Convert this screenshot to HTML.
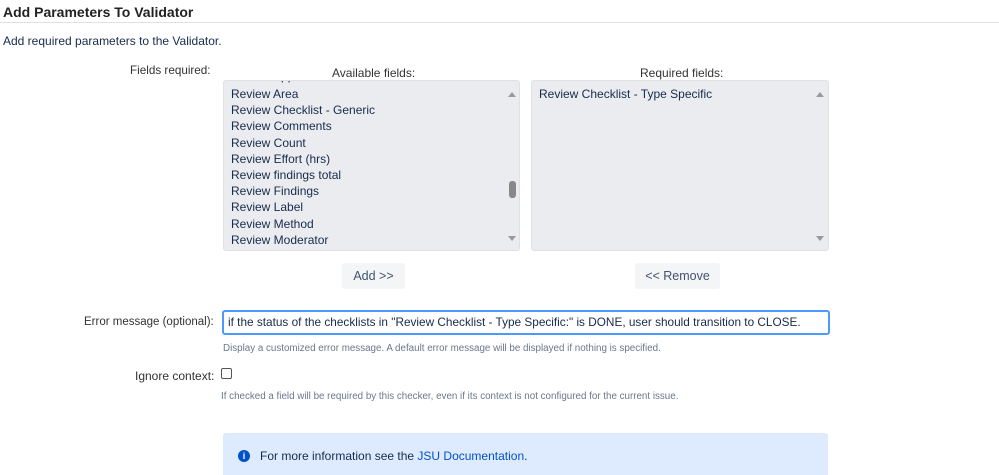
<!DOCTYPE html>
<html><head><meta charset="utf-8"><style>
body{margin:0;width:999px;height:475px;background:#fff;font-family:"Liberation Sans",sans-serif;color:#172b4d;position:relative;overflow:hidden;font-size:12px}
.a{position:absolute;white-space:nowrap}
.box{position:absolute;background:#ebecf0;border-radius:3px;border:1px solid #dfe1e6;box-sizing:border-box;overflow:hidden}
.it{position:absolute;left:14px;font-size:12px;color:#172b4d}
.btn{position:absolute;background:#f4f5f7;border-radius:3px;font-size:12.5px;color:#42526e;text-align:center;line-height:26px;height:26px}
.help{color:#6b778c}
.arr{position:absolute;width:0;height:0;border-left:4px solid transparent;border-right:4px solid transparent}
</style></head><body>
<div class="a" style="left:3px;top:4px;font-weight:bold;font-size:14px;color:#222">Add Parameters To Validator</div>
<div class="a" style="left:0;top:22px;width:999px;height:1px;background:#dfe1e6"></div>
<div class="a" style="left:3px;top:34px;">Add required parameters to the Validator.</div>
<div class="a" style="left:130px;top:64px;color:#333;font-size:11.7px">Fields required:</div>
<div class="a" style="left:332px;top:66px;color:#333">Available fields:</div>
<div class="a" style="left:640px;top:66px;color:#333">Required fields:</div>
<div class="box" style="left:223px;top:80px;width:297px;height:171px">
 <div class="it" style="left:7px;top:-12px">Review Approvers</div>
 <div class="it" style="left:7px;top:6px">Review Area</div>
 <div class="it" style="left:7px;top:22px">Review Checklist - Generic</div>
 <div class="it" style="left:7px;top:38px">Review Comments</div>
 <div class="it" style="left:7px;top:55px">Review Count</div>
 <div class="it" style="left:7px;top:71px">Review Effort (hrs)</div>
 <div class="it" style="left:7px;top:87px">Review findings total</div>
 <div class="it" style="left:7px;top:103px">Review Findings</div>
 <div class="it" style="left:7px;top:119px">Review Label</div>
 <div class="it" style="left:7px;top:136px">Review Method</div>
 <div class="it" style="left:7px;top:152px">Review Moderator</div>
 <div class="arr" style="left:284px;top:11px;border-bottom:5px solid #9a9a9a"></div>
 <div class="arr" style="left:284px;top:155px;border-top:5px solid #9a9a9a"></div>
 <div class="a" style="left:285px;top:100px;width:7px;height:17px;background:#888;border-radius:3px"></div>
</div>
<div class="box" style="left:531px;top:80px;width:298px;height:171px">
 <div class="it" style="left:7px;top:6px">Review Checklist - Type Specific</div>
 <div class="arr" style="left:284px;top:11px;border-bottom:5px solid #9a9a9a"></div>
 <div class="arr" style="left:284px;top:155px;border-top:5px solid #9a9a9a"></div>
</div>
<div class="btn" style="left:342px;top:263px;width:63px">Add &gt;&gt;</div>
<div class="btn" style="left:635px;top:263px;width:85px">&lt;&lt; Remove</div>
<div class="a" style="left:84px;top:316px;color:#333;font-size:11.5px">Error message (optional):</div>
<div class="a" style="left:222px;top:310px;width:608px;height:25px;border:2px solid #4c9aff;border-radius:3px;box-sizing:border-box;padding-left:4px;line-height:21px;font-size:11.8px">if the status of the checklists in "Review Checklist - Type Specific:" is DONE, user should transition to CLOSE.</div>
<div class="a help" style="left:223px;top:343px;font-size:9.8px">Display a customized error message. A default error message will be displayed if nothing is specified.</div>
<div class="a" style="left:135px;top:369px;color:#333">Ignore context:</div>
<div class="a" style="left:221px;top:368px;width:11px;height:11px;border:1px solid #555;border-radius:2px;box-sizing:border-box"></div>
<div class="a help" style="left:221px;top:391px;font-size:9.8px">If checked a field will be required by this checker, even if its context is not configured for the current issue.</div>
<div class="a" style="left:223px;top:433px;width:605px;height:42px;background:#deebff;border-radius:3px 3px 0 0"></div>
<div class="a" style="left:238px;top:450px;width:12px;height:12px;border-radius:50%;background:#0052cc;color:#fff;font-size:9px;font-weight:bold;text-align:center;line-height:12px">i</div>
<div class="a" style="left:260px;top:449px">For more information see the <span style="color:#0052cc">JSU Documentation</span>.</div>
</body></html>
